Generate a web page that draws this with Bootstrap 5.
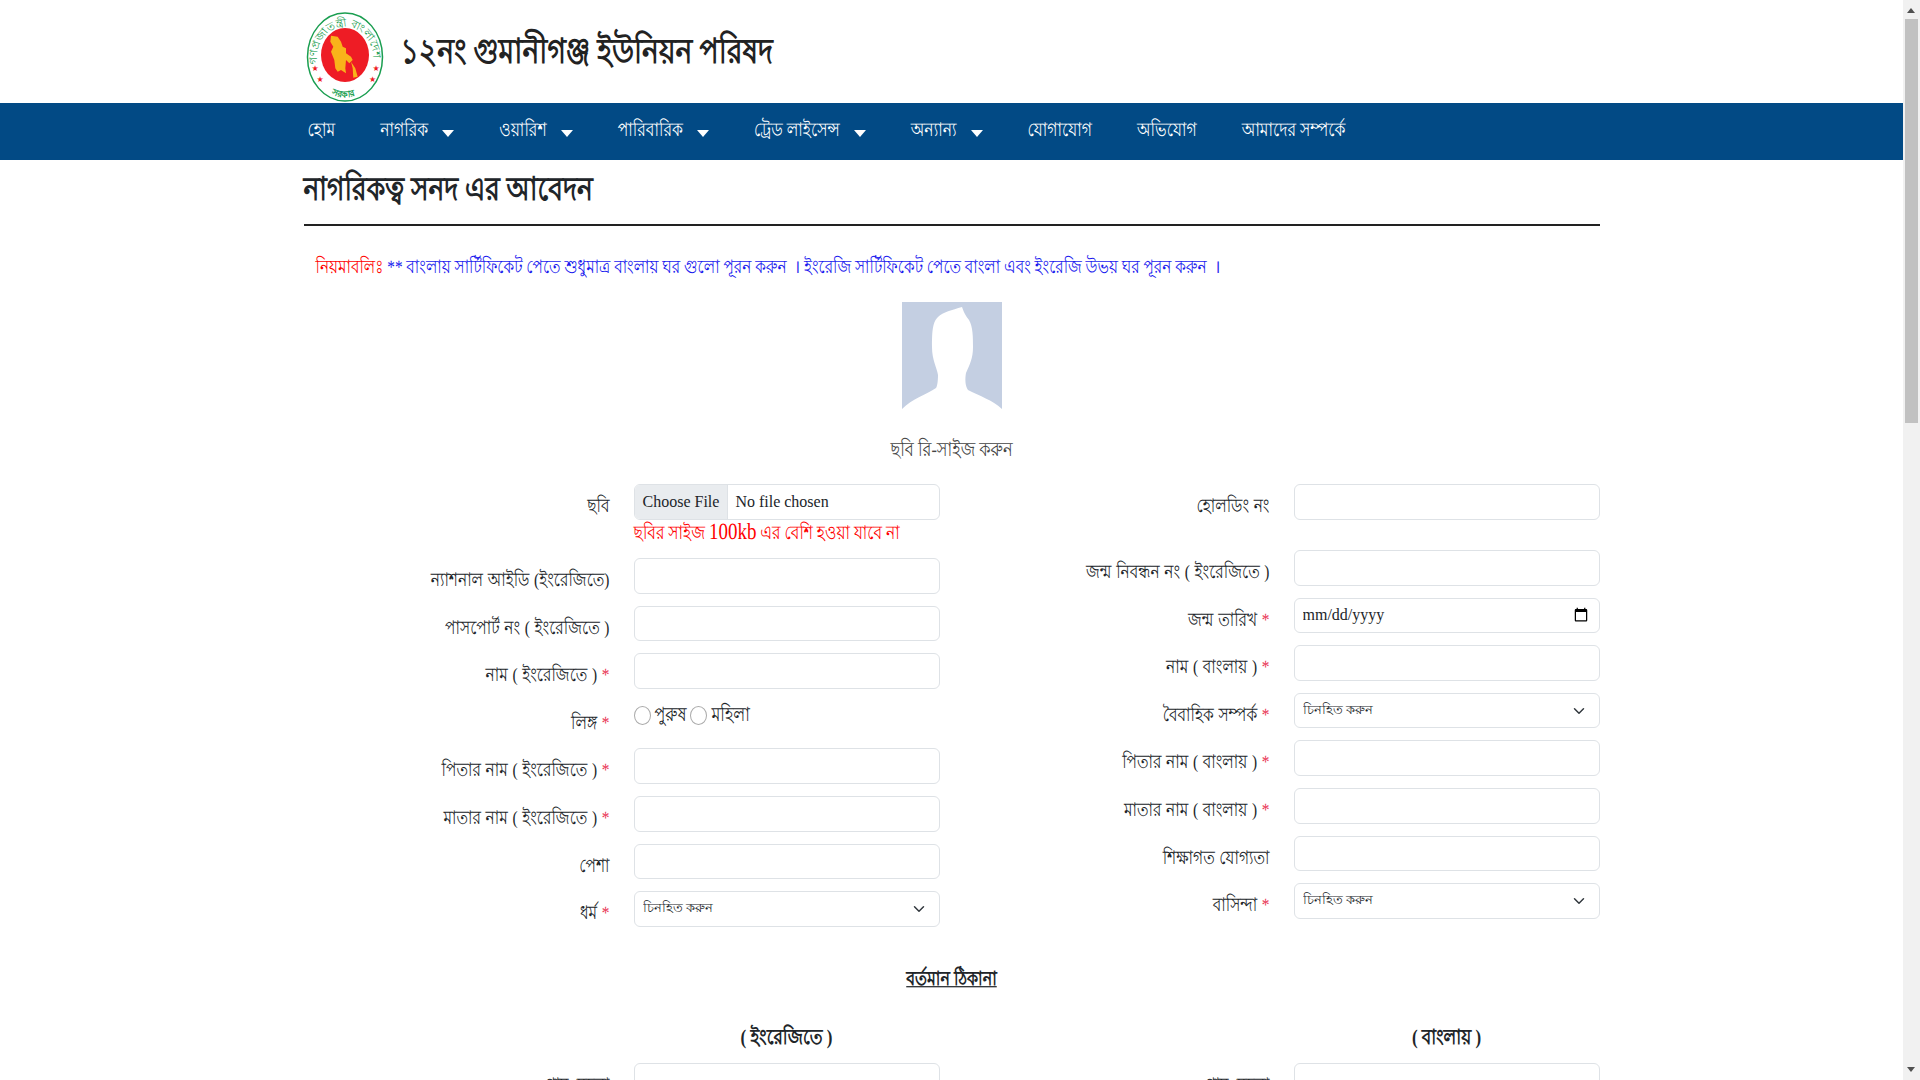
<!DOCTYPE html>
<html lang="bn">
<head>
<meta charset="utf-8">
<title>নাগরিকত্ব সনদ এর আবেদন</title>
<link href="https://cdn.jsdelivr.net/npm/bootstrap@5.3.0/dist/css/bootstrap.min.css" rel="stylesheet">
<style>
body{font-family:"Liberation Serif","Noto Sans",serif;color:#212529;font-size:16px;padding-right:17px;text-rendering:geometricPrecision}
.tall-text{display:inline-block;transform:scaleY(1.22)}
.site-head{height:103px;padding-top:12px}
.site-logo{width:78px;height:90px;flex:none;margin-left:2px;overflow:visible}
.site-title{font-size:28.3px;line-height:34px;font-weight:700;margin:24px 0 0 17px;color:#222}
.main-bar{background:#024a85;height:57px}
.main-bar a{color:#fff;text-decoration:none;font-size:15.6px;line-height:56px;white-space:nowrap;margin-left:45px}
.main-bar a:first-child{margin-left:4px}
.caret-mark{display:inline-block;border:6px solid transparent;border-top:7px solid #fff;border-bottom:0;margin-left:14px;vertical-align:-2px}
.page-title{font-size:26.6px;font-weight:700;margin:7px 0 0;line-height:45px}
.title-rule{border-top:2px solid #222;opacity:1;margin:12px 0 0}
.notice-line{font-size:15.3px;padding-left:12px;margin:29px 0 0;line-height:26px;color:#1a1aee}
.notice-red{color:#f00}
.photo-box{width:100px;height:108px;display:block;margin:21px auto 0}
.photo-cap{text-align:center;color:#444;font-size:16.2px;margin:27px 0 21px;line-height:26px}
.form-control,.form-select{height:35.6px;min-height:35.6px;padding:4px 8px;line-height:24px;font-size:16px}
.form-control::file-selector-button{margin:-4px 7px -4px -8px;padding:4px 8px;height:34px;background:#e9ecef}
.form-control:hover:not(:disabled):not([readonly])::file-selector-button{background:#e9ecef}
.form-select{font-size:12.5px;padding-bottom:12px;background-position:right 12px center}
.field-row{margin-bottom:12px}
.holding-row{margin-bottom:30.4px}
.field-label{text-align:right;font-size:15.4px;word-spacing:.8px;padding-top:10px;line-height:26px;height:35.6px;white-space:nowrap}
.req-mark{color:#e8304f}
.size-warn{color:#f00;font-size:15.5px;line-height:26px;margin:0;height:38.4px}
.size-warn b{font-size:19px;font-weight:400}
.form-check-input{margin:0;width:17px;height:19px;flex:none;border-color:#aaa}
.gender-row{height:35.6px;padding-top:5px;font-size:16px;line-height:19px}
.sec-title{text-align:center;font-weight:700;font-size:15.9px;margin:28px 0 0;line-height:26px}
.sec-title .tall-text{text-decoration:underline}
.sub-title{text-align:center;font-weight:700;font-size:17px;line-height:26px;margin:32px 0 12px}
.scroll-rail{position:fixed;top:0;right:0;bottom:0;width:17px;background:#f1f1f1}
.scroll-thumb{position:absolute;top:19px;left:2px;right:2px;height:404px;background:#c1c1c1}
.scroll-arrow{position:absolute;left:4px;border:4.5px solid transparent}
.scroll-up{top:8px;border-top:0;border-bottom:5px solid #505050}
.scroll-down{bottom:8px;border-bottom:0;border-top:5px solid #505050}
</style>
</head>
<body>
<div class="container">
  <div class="site-head d-flex align-items-start">
    <svg class="site-logo" viewBox="0 0 78 90" role="img" aria-label="logo">
      <ellipse cx="39" cy="45" rx="37.5" ry="44" fill="#fff" stroke="#1a9e50" stroke-width="1.5"/>
      <ellipse cx="39" cy="43" rx="24" ry="27" fill="#ee1c25"/>
      <path d="M25 23.7 31.7 24.7 35 29.7 36.7 34.7 40 36.3 40 41.3 45 44.7 46.7 48 43.3 51.3 40 48 39.3 56.3 40 61.3 35 58 31.7 59.7 29.3 56.3 28.3 48 25 39.7 27.3 34.7 24.3 29.7Z" fill="#f9b31a"/>
      <path d="M45 49.7 49.3 56.3 51.7 64.7 47.3 65.7 46.7 56.3Z" fill="#f9b31a"/>
      <defs>
        <path id="arcTop" d="M12 54A28 31 0 1 1 66 54"/>
        <path id="arcBot" d="M16 76Q38 95 62 76"/>
      </defs>
      <text font-size="11" fill="#1a9e50"><textPath href="#arcTop" startOffset="2%">গণপ্রজাতন্ত্রী বাংলাদেশ</textPath></text>
      <text font-size="9" fill="#1a9e50" font-weight="700"><textPath href="#arcBot" startOffset="22%">সরকার</textPath></text>
      <g fill="#ee1c25" font-size="8" text-anchor="middle" font-family="DejaVu Sans"><text x="9" y="59">★</text><text x="70" y="59">★</text><text x="14" y="70">★</text><text x="66.7" y="70">★</text></g>
    </svg>
    <h1 class="site-title"><span class="tall-text">১২নং গুমানীগঞ্জ ইউনিয়ন পরিষদ</span></h1>
  </div>
</div>
<nav class="main-bar">
  <div class="container d-flex">
    <a href="#"><span class="tall-text">হোম</span></a>
    <a href="#"><span class="tall-text">নাগরিক</span><span class="caret-mark"></span></a>
    <a href="#"><span class="tall-text">ওয়ারিশ</span><span class="caret-mark"></span></a>
    <a href="#"><span class="tall-text">পারিবারিক</span><span class="caret-mark"></span></a>
    <a href="#"><span class="tall-text">ট্রেড লাইসেন্স</span><span class="caret-mark"></span></a>
    <a href="#"><span class="tall-text">অন্যান্য</span><span class="caret-mark"></span></a>
    <a href="#"><span class="tall-text">যোগাযোগ</span></a>
    <a href="#"><span class="tall-text">অভিযোগ</span></a>
    <a href="#"><span class="tall-text">আমাদের সম্পর্কে</span></a>
  </div>
</nav>
<main class="container">
  <h2 class="page-title"><span class="tall-text">নাগরিকত্ব সনদ এর আবেদন</span></h2>
  <hr class="title-rule">
  <p class="notice-line"><span class="tall-text"><span class="notice-red">নিয়মাবলিঃ</span> ** বাংলায় সার্টিফিকেট পেতে শুধুমাত্র বাংলায় ঘর গুলো পূরন করুন &nbsp;। ইংরেজি সার্টিফিকেট পেতে বাংলা এবং ইংরেজি উভয় ঘর পূরন করুন &nbsp;।</span></p>
  <svg class="photo-box" viewBox="0 0 100 108" role="img" aria-label="photo">
    <rect width="100" height="108" fill="#c4cfe2"/>
    <path d="M60 5C50 8 41 10 36 15 31 20 30 27 30 45 30 58 35 66 36 73 36 80 35 85 34 86 25 92 10 97 0 107V108H100V107C90 98 78 94 66 88 63 84 63 76 64 71 68 62 71 56 71 45 71 35 71 25 67 18 64 14 62 11 60 5Z" fill="#fff"/>
  </svg>
  <p class="photo-cap"><span class="tall-text">ছবি রি-সাইজ করুন</span></p>
  <form>
    <div class="row">
      <div class="col-6">
        <div class="row field-row mb-0"><div class="col-6 field-label"><span class="tall-text">ছবি</span></div><div class="col-6"><input class="form-control" type="file"><p class="size-warn"><span class="tall-text">ছবির সাইজ <b>100kb</b> এর বেশি হওয়া যাবে না</span></p></div></div>
        <div class="row field-row"><div class="col-6 field-label"><span class="tall-text">ন্যাশনাল আইডি (ইংরেজিতে)</span></div><div class="col-6"><input class="form-control" type="text"></div></div>
        <div class="row field-row"><div class="col-6 field-label"><span class="tall-text">পাসপোর্ট নং ( ইংরেজিতে )</span></div><div class="col-6"><input class="form-control" type="text"></div></div>
        <div class="row field-row"><div class="col-6 field-label"><span class="tall-text">নাম ( ইংরেজিতে ) <span class="req-mark">*</span></span></div><div class="col-6"><input class="form-control" type="text"></div></div>
        <div class="row field-row"><div class="col-6 field-label"><span class="tall-text">লিঙ্গ <span class="req-mark">*</span></span></div><div class="col-6"><div class="gender-row d-flex align-items-start gap-1"><input class="form-check-input" type="radio" name="g"><span class="tall-text">পুরুষ</span><input class="form-check-input" type="radio" name="g"><span class="tall-text">মহিলা</span></div></div></div>
        <div class="row field-row"><div class="col-6 field-label"><span class="tall-text">পিতার নাম ( ইংরেজিতে ) <span class="req-mark">*</span></span></div><div class="col-6"><input class="form-control" type="text"></div></div>
        <div class="row field-row"><div class="col-6 field-label"><span class="tall-text">মাতার নাম ( ইংরেজিতে ) <span class="req-mark">*</span></span></div><div class="col-6"><input class="form-control" type="text"></div></div>
        <div class="row field-row"><div class="col-6 field-label"><span class="tall-text">পেশা</span></div><div class="col-6"><input class="form-control" type="text"></div></div>
        <div class="row field-row"><div class="col-6 field-label"><span class="tall-text">ধর্ম <span class="req-mark">*</span></span></div><div class="col-6"><select class="form-select"><option>চিনহিত করুন</option></select></div></div>
      </div>
      <div class="col-6">
        <div class="row holding-row"><div class="col-6 field-label"><span class="tall-text">হোলডিং নং</span></div><div class="col-6"><input class="form-control" type="text"></div></div>
        <div class="row field-row"><div class="col-6 field-label"><span class="tall-text">জন্ম নিবন্ধন নং ( ইংরেজিতে )</span></div><div class="col-6"><input class="form-control" type="text"></div></div>
        <div class="row field-row"><div class="col-6 field-label"><span class="tall-text">জন্ম তারিখ <span class="req-mark">*</span></span></div><div class="col-6"><input class="form-control" type="date"></div></div>
        <div class="row field-row"><div class="col-6 field-label"><span class="tall-text">নাম ( বাংলায় ) <span class="req-mark">*</span></span></div><div class="col-6"><input class="form-control" type="text"></div></div>
        <div class="row field-row"><div class="col-6 field-label"><span class="tall-text">বৈবাহিক সম্পর্ক <span class="req-mark">*</span></span></div><div class="col-6"><select class="form-select"><option>চিনহিত করুন</option></select></div></div>
        <div class="row field-row"><div class="col-6 field-label"><span class="tall-text">পিতার নাম ( বাংলায় ) <span class="req-mark">*</span></span></div><div class="col-6"><input class="form-control" type="text"></div></div>
        <div class="row field-row"><div class="col-6 field-label"><span class="tall-text">মাতার নাম ( বাংলায় ) <span class="req-mark">*</span></span></div><div class="col-6"><input class="form-control" type="text"></div></div>
        <div class="row field-row"><div class="col-6 field-label"><span class="tall-text">শিক্ষাগত যোগ্যতা</span></div><div class="col-6"><input class="form-control" type="text"></div></div>
        <div class="row field-row"><div class="col-6 field-label"><span class="tall-text">বাসিন্দা <span class="req-mark">*</span></span></div><div class="col-6"><select class="form-select"><option>চিনহিত করুন</option></select></div></div>
      </div>
    </div>
    <p class="sec-title"><span class="tall-text">বর্তমান ঠিকানা</span></p>
    <div class="row">
      <div class="col-6">
        <div class="row"><div class="col-6"></div><div class="col-6"><p class="sub-title"><span class="tall-text">( ইংরেজিতে )</span></p></div></div>
        <div class="row field-row"><div class="col-6 field-label"><span class="tall-text">গ্রাম /মহল্লা</span></div><div class="col-6"><input class="form-control" type="text"></div></div>
      </div>
      <div class="col-6">
        <div class="row"><div class="col-6"></div><div class="col-6"><p class="sub-title"><span class="tall-text">( বাংলায় )</span></p></div></div>
        <div class="row field-row"><div class="col-6 field-label"><span class="tall-text">গ্রাম /মহল্লা</span></div><div class="col-6"><input class="form-control" type="text"></div></div>
      </div>
    </div>
  </form>
</main>
<div class="scroll-rail" aria-hidden="true"><span class="scroll-arrow scroll-up"></span><span class="scroll-thumb"></span><span class="scroll-arrow scroll-down"></span></div>
</body>
</html>
